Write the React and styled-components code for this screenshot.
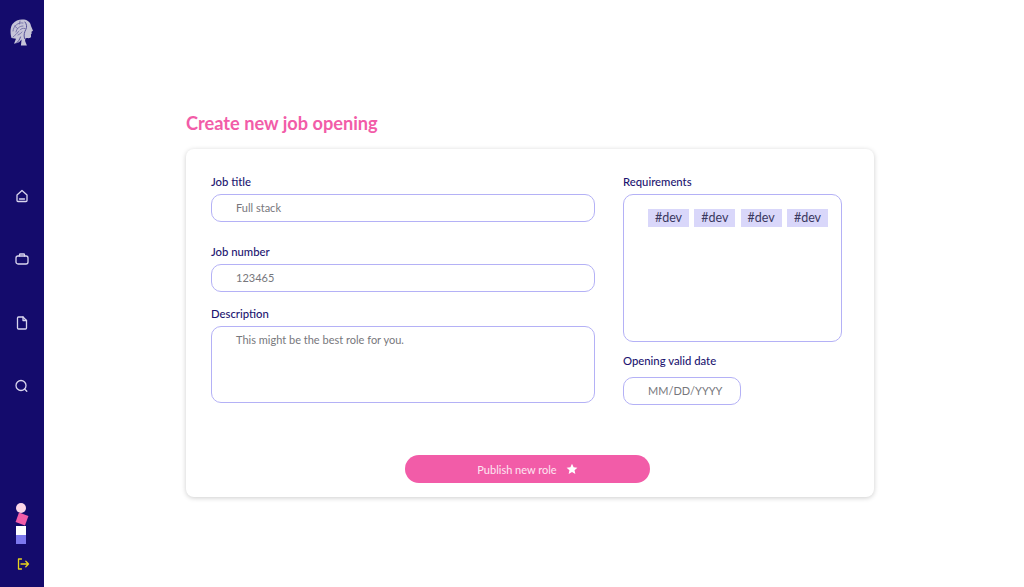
import React from "react"
import styled, { createGlobalStyle } from "styled-components"

const GlobalStyle = createGlobalStyle`
  html, body {
    margin: 0;
    padding: 0;
    background: #fff;
    font-family: Lato, "Open Sans", sans-serif;
  }
  * {
    box-sizing: border-box;
  }
`

const Page = styled.div`
  display: flex;
  width: 1024px;
  height: 587px;
  overflow: hidden;
`

const Sidebar = styled.nav`
  width: 44px;
  flex-shrink: 0;
  background: #140b6c;
  display: flex;
  flex-direction: column;
  align-items: center;
`

const Logo = styled.svg`
  width: 24px;
  height: 30px;
  margin-top: 19px;
  margin-left: 10px;
  align-self: flex-start;
`

const NavList = styled.div`
  margin-top: 139px;
  display: flex;
  flex-direction: column;
  gap: 47.4px;
`

const NavIcon = styled.svg`
  display: block;
  width: 16px;
  height: 16px;
  margin-left: -1px;
  fill: none;
  stroke: #d9d6ee;
  stroke-width: 1.3;
  stroke-linecap: round;
  stroke-linejoin: round;
`

const Shapes = styled.div`
  margin-top: 109px;
  display: flex;
  flex-direction: column;
  align-items: center;
`

const Dot = styled.div`
  width: 10px;
  height: 10px;
  margin-left: -3px;
  border-radius: 50%;
  background: #fbd7e8;
`

const Diamond = styled.div`
  width: 10px;
  height: 10px;
  margin-top: 1px;
  background: #f25ca8;
  transform: rotate(20deg);
`

const Block = styled.div`
  width: 10px;
  height: 9px;
  margin-left: -3px;
  margin-top: ${props => props.$gap || 0}px;
  background: ${props => props.$color};
`

const ExitIcon = styled.svg`
  margin-top: 13px;
  margin-left: 1px;
  width: 14px;
  height: 14px;
  fill: none;
  stroke: #e6d21e;
  stroke-width: 1.3;
  stroke-linecap: round;
  stroke-linejoin: round;
`

const Main = styled.main`
  flex: 1;
  padding: 112px 0 0 142px;
`

const Title = styled.h1`
  margin: 0 0 14px;
  height: 23px;
  font-size: 18.2px;
  line-height: 23px;
  font-weight: 700;
  color: #f25ca8;
`

const Card = styled.section`
  width: 688px;
  height: 348px;
  padding: 26px 32px 14px 25px;
  background: #fff;
  border-radius: 8px;
  box-shadow: 0 1px 5px rgba(0, 0, 0, 0.2);
  display: flex;
  flex-direction: column;
`

const Columns = styled.div`
  flex: 1;
  display: flex;
  gap: 28px;
`

const Column = styled.div`
  display: flex;
  flex-direction: column;
  width: ${props => props.$width}px;
`

const Label = styled.label`
  display: block;
  height: 14px;
  margin-top: ${props => props.$top || 0}px;
  margin-bottom: 5px;
  font-size: 11.3px;
  line-height: 14px;
  font-weight: 500;
  color: #1c1470;
`

const Input = styled.input`
  display: block;
  width: ${props => props.$width || "100%"};
  height: 28px;
  margin-top: ${props => props.$top || 0}px;
  padding: 0 0 2px 24px;
  border: 1px solid #b4b1f6;
  border-radius: 10px;
  outline: none;
  background: #fff;
  font-family: inherit;
  font-size: 11px;
  color: #77777c;

  &::placeholder {
    color: #77777c;
    opacity: 1;
  }
`

const TextArea = styled.textarea`
  display: block;
  width: 100%;
  height: 77px;
  padding: 5px 0 0 24px;
  border: 1px solid #b4b1f6;
  border-radius: 10px;
  outline: none;
  resize: none;
  font-family: inherit;
  font-size: 11px;
  line-height: 15px;
  color: #77777c;
`

const TagBox = styled.div`
  height: 148px;
  padding: 14px 13px 0 24px;
  border: 1px solid #b4b1f6;
  border-radius: 10px;
  display: flex;
  align-items: flex-start;
  justify-content: space-between;
`

const Tag = styled.span`
  width: 41px;
  height: 18px;
  background: #d9d7fa;
  font-size: 12.5px;
  line-height: 18px;
  text-align: center;
  color: #3a3860;
`

const Footer = styled.div`
  display: flex;
  justify-content: center;
  padding-left: 2px;
`

const PublishButton = styled.button`
  width: 245px;
  height: 28px;
  padding: 0;
  border: none;
  border-radius: 14px;
  background: #f25ca8;
  color: #fde6f2;
  font-family: inherit;
  font-size: 11px;
  display: flex;
  align-items: center;
  justify-content: center;
  gap: 9px;
`

const Star = styled.svg`
  width: 12px;
  height: 12px;
  fill: #fff;
`

const tags = ["#dev", "#dev", "#dev", "#dev"]

export default function App() {
  return (
    <Page>
      <GlobalStyle />
      <Sidebar>
        <Logo viewBox="0 0 24 30">
          <path
            d="M1.500 19C0 14 .2 8 2.500 5 5.500 1 10 0 14 .5c4 .6 6.500 3 7 6.500l2 4.800-1.500.9.200 1.800-.8 1 .2 1.800c0 1.500-1.500 2.200-4.300 1.800l-1.500.4-.2 2.500 1.800 4.500h-6l.7-6-2.600 2.700-5 1.500 2-5z"
            fill="#c6c4d8"
          />
          <path
            d="M3 12c.5-5 5-9 10-8M6 13c.5-3 3-6 7-6M10 11c1-1.500 3-2 5-1.500M3 18c2-2 4-3 5.500-5.500M8 16c1.500-1 3-1.500 4-3M4.500 7l3 2.500M10 2l-.5 3"
            fill="none"
            stroke="#68639f"
            strokeWidth="0.8"
            strokeLinecap="round"
          />
          <path
            d="M15 3c2 2.500 2 5 .8 7.500-1.300 2.700-2.300 5-1.300 9M6.500 24c1.500-1 3-3 4-6"
            fill="none"
            stroke="#4a4490"
            strokeWidth="0.9"
            strokeLinecap="round"
          />
        </Logo>
        <NavList>
          <NavIcon viewBox="0 0 16 16">
            <path d="M3 7l5-4.500L13 7v5.500a1 1 0 0 1-1 1H4a1 1 0 0 1-1-1z" />
            <path d="M5.500 11h5" />
          </NavIcon>
          <NavIcon viewBox="0 0 16 16">
            <rect x="2" y="5" width="12" height="8" rx="2" />
            <path d="M5.500 5V3.800c0-.5.4-.8.8-.8h3.400c.4 0 .8.3.8.8V5" />
          </NavIcon>
          <NavIcon viewBox="0 0 16 16">
            <path d="M3.500 3a1 1 0 0 1 1-1h4.500l3.500 3.500V13a1 1 0 0 1-1 1h-7a1 1 0 0 1-1-1z" />
            <path d="M9 2v3.500h3.500" />
          </NavIcon>
          <NavIcon viewBox="0 0 16 16">
            <circle cx="7" cy="7.500" r="5" />
            <path d="M10.800 11.300l2 2" />
          </NavIcon>
        </NavList>
        <Shapes>
          <Dot />
          <Diamond />
          <Block $color="#fff" $gap={2} />
          <Block $color="#7c78ee" />
        </Shapes>
        <ExitIcon viewBox="0 0 14 14">
          <path d="M5.500 2H2.500v10h3" />
          <path d="M5 7h7.500M9.800 4.300L12.500 7l-2.700 2.700" />
        </ExitIcon>
      </Sidebar>
      <Main>
        <Title>Create new job opening</Title>
        <Card>
          <Columns>
            <Column $width={384}>
              <Label>Job title</Label>
              <Input readOnly placeholder="Full stack" />
              <Label $top={23}>Job number</Label>
              <Input readOnly placeholder="123465" />
              <Label $top={15}>Description</Label>
              <TextArea readOnly value="This might be the best role for you." />
            </Column>
            <Column $width={219}>
              <Label>Requirements</Label>
              <TagBox>
                {tags.map((tag, i) => (
                  <Tag key={i}>{tag}</Tag>
                ))}
              </TagBox>
              <Label $top={12}>Opening valid date</Label>
              <Input readOnly placeholder="MM/DD/YYYY" $width="118px" $top={4} />
            </Column>
          </Columns>
          <Footer>
            <PublishButton>
              Publish new role
              <Star viewBox="0 0 24 24">
                <path d="M12 1.500l3.200 7 7.600.8-5.700 5.100 1.600 7.500L12 18l-6.700 3.900 1.600-7.500L1.200 9.300l7.600-.8z" />
              </Star>
            </PublishButton>
          </Footer>
        </Card>
      </Main>
    </Page>
  )
}
